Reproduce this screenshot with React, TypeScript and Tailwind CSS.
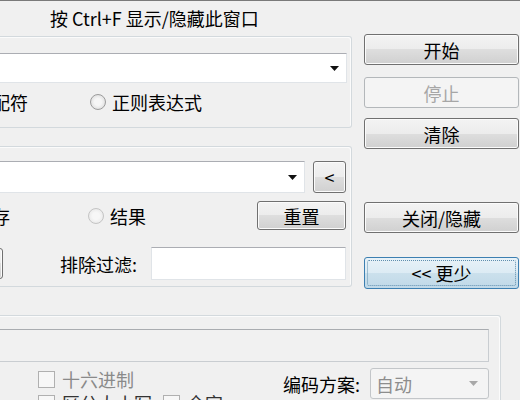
import { ReactNode } from 'react';

function WinButton({
    children,
    className = '',
    disabled = false,
    primary = false,
}: {
    children: ReactNode;
    className?: string;
    disabled?: boolean;
    primary?: boolean;
}) {
    const look = disabled
        ? 'border-[#b3b7ba] bg-[#f4f4f4] text-[#a6a6a6]'
        : primary
          ? 'border-[#3c7fb1] bg-[image:linear-gradient(#e8f2f8_0%,#dcebf4_50%,#cbe0ec_50%,#c0d9e8_100%)] text-black'
          : 'border-[#707070] bg-[image:linear-gradient(#f3f3f3_0%,#ececec_50%,#dedede_50%,#d0d0d0_100%)] text-black shadow-[inset_0_0_0_1px_#fbfbfb]';
    return (
        <div className={`relative flex items-center justify-center rounded-[3px] border leading-none ${look} ${className}`}>
            {primary && <span className="absolute inset-[2px] rounded-[2px] border border-dotted border-[#5f8fae]" />}
            <span className="relative">{children}</span>
        </div>
    );
}

function Radio({ faded = false }: { faded?: boolean }) {
    return (
        <span
            className={`inline-block h-[16px] w-[16px] shrink-0 rounded-full border ${
                faded
                    ? 'border-[#c4c4c4] bg-[image:radial-gradient(circle,#f7f7f7_35%,#e2e2e2_100%)]'
                    : 'border-[#9c9c9c] bg-[image:radial-gradient(circle,#f6f6f6_35%,#d3d3d3_100%)]'
            }`}
        />
    );
}

function Check() {
    return <span className="inline-block h-[17px] w-[17px] shrink-0 border border-[#b0b0b0] bg-[#f7f7f7]" />;
}

function Arrow({ gray = false }: { gray?: boolean }) {
    return (
        <svg width="9" height="5" viewBox="0 0 9 5">
            <path d="M0 0 H9 L4.5 5 Z" fill={gray ? '#a8a8a8' : '#111'} />
        </svg>
    );
}

export default function App() {
    return (
        <div className="flex h-[400px] w-[520px] flex-col overflow-hidden border-t border-[#7a7a7a] bg-[#f0f0f0] font-['Noto_Sans_CJK_SC',sans-serif] text-[18px] text-black">
            {/* 标题提示 */}
            <div className="flex h-[33px] shrink-0 items-center pl-[50px] leading-none">按 Ctrl+F 显示/隐藏此窗口</div>

            <div className="flex shrink-0 items-start">
                {/* 左侧分组 */}
                <div className="flex w-[352px] shrink-0 flex-col gap-[18px] pt-[2px]">
                    <div className="flex h-[92px] flex-col rounded-r-[3px] border border-l-0 border-[#d3d9dd] pr-[4px] pt-[16px] shadow-[inset_-1px_1px_0_#fbfbfb]">
                        <div className="flex h-[30px] items-center justify-end border border-l-0 border-[#e0e4e8] border-t-[#abadb3] bg-white pr-[7px]">
                            <Arrow />
                        </div>
                        <div className="-ml-[47px] mt-[9px] flex h-[20px] items-center leading-none">
                            <Radio />
                            <span className="ml-[5px]">通配符</span>
                            <span className="ml-[62px]"><Radio /></span>
                            <span className="ml-[6px]">正则表达式</span>
                        </div>
                    </div>

                    <div className="flex h-[141px] flex-col rounded-r-[3px] border border-l-0 border-[#d3d9dd] pr-[5px] pt-[14px] shadow-[inset_-1px_1px_0_#fbfbfb]">
                        <div className="flex h-[32px] items-stretch">
                            <div className="flex w-[305px] items-center justify-end border border-l-0 border-[#e0e4e8] border-t-[#abadb3] bg-white pr-[7px]">
                                <Arrow />
                            </div>
                            <WinButton className="ml-[8px] w-[33px] text-[#444]">&lt;</WinButton>
                        </div>
                        <div className="-ml-[47px] mt-[8px] flex h-[29px] items-center leading-none">
                            <Radio />
                            <span className="ml-[5px]">保存</span>
                            <span className="ml-[78px]"><Radio faded /></span>
                            <span className="ml-[6px]">结果</span>
                            <WinButton className="ml-auto h-[29px] w-[89px]">重置</WinButton>
                        </div>
                        <div className="mt-[17px] flex h-[33px] items-center leading-none">
                            <WinButton className="-ml-[77px] h-[31px] w-[80px]">浏览</WinButton>
                            <span className="ml-[57px]">排除过滤:</span>
                            <div className="ml-auto h-[33px] w-[195px] border border-[#e0e4e8] border-t-[#abadb3] bg-white" />
                        </div>
                    </div>
                </div>

                {/* 右侧按钮 */}
                <div className="ml-[12px] flex w-[155px] shrink-0 flex-col">
                    <WinButton className="h-[31px]">开始</WinButton>
                    <WinButton className="mt-[12px] h-[31px]" disabled>停止</WinButton>
                    <WinButton className="mt-[10px] h-[31px]">清除</WinButton>
                    <WinButton className="mt-[53px] h-[31px]">关闭/隐藏</WinButton>
                    <WinButton className="mt-[24px] h-[32px]" primary>&lt;&lt; 更少</WinButton>
                </div>
            </div>

            {/* 下方分组 */}
            <div className="mt-[26px] flex w-[501px] shrink-0 flex-col rounded-r-[3px] border border-l-0 border-[#d3d9dd] pr-[11px] pt-[13px] shadow-[inset_-1px_1px_0_#fbfbfb]">
                <div className="h-[33px] w-[489px] border border-l-0 border-[#c9cdd1] border-t-[#a9acb0] bg-[#f1f1f1]" />
                <div className="mt-[5px] flex items-start">
                    <div className="flex flex-col pl-[38px] leading-none">
                        <div className="flex h-[24px] items-center">
                            <Check />
                            <span className="ml-[7px] text-[#8a8a8a]">十六进制</span>
                        </div>
                        <div className="flex h-[24px] items-center">
                            <Check />
                            <span className="ml-[7px] w-[101px] text-[#333]">区分大小写</span>
                            <Check />
                            <span className="ml-[7px] text-[#333]">全字</span>
                        </div>
                    </div>
                    <div className="ml-auto mt-[1px] flex h-[31px] items-center leading-none">
                        <span>编码方案:</span>
                        <div className="ml-[10px] flex h-[31px] w-[119px] items-center justify-between rounded-[3px] border border-[#c3c6c9] bg-[#f4f4f4] pl-[5px] pr-[10px] text-[#8d8d8d]">
                            <span>自动</span>
                            <Arrow gray />
                        </div>
                    </div>
                </div>
            </div>
        </div>
    );
}
